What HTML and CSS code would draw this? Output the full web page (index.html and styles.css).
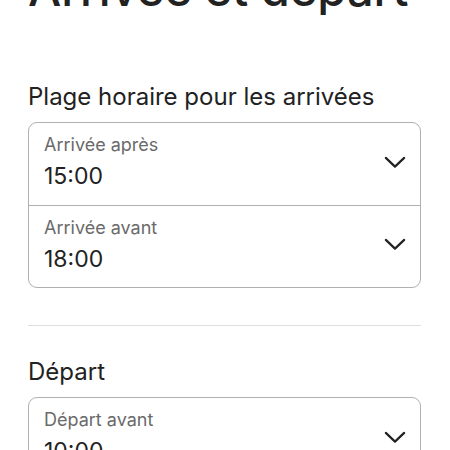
FILE: index.html
```html
<!DOCTYPE html>
<html lang="fr">
<head>
<meta charset="utf-8">
<link rel="stylesheet" href="styles.css">
</head>
<body>
<main class="page">
  <h1 class="title">Arrivée et départ</h1>
  <section class="section section-first">
    <h2 class="section-title">Plage horaire pour les arrivées</h2>
    <div class="select-group">
      <div class="select-row">
        <div class="select-text">
          <div class="select-label">Arrivée après</div>
          <div class="select-value">15:00</div>
        </div>
        <svg class="chevron" viewBox="0 0 24 14" width="22" height="13"><path d="M2 2 L12 11.5 L22 2" fill="none" stroke="#222" stroke-width="2.4" stroke-linecap="round" stroke-linejoin="round"/></svg>
      </div>
      <div class="select-row">
        <div class="select-text">
          <div class="select-label">Arrivée avant</div>
          <div class="select-value">18:00</div>
        </div>
        <svg class="chevron" viewBox="0 0 24 14" width="22" height="13"><path d="M2 2 L12 11.5 L22 2" fill="none" stroke="#222" stroke-width="2.4" stroke-linecap="round" stroke-linejoin="round"/></svg>
      </div>
    </div>
  </section>
  <hr class="divider">
  <section class="section">
    <h2 class="section-title">Départ</h2>
    <div class="select-group">
      <div class="select-row">
        <div class="select-text">
          <div class="select-label">Départ avant</div>
          <div class="select-value">10:00</div>
        </div>
        <svg class="chevron" viewBox="0 0 24 14" width="22" height="13"><path d="M2 2 L12 11.5 L22 2" fill="none" stroke="#222" stroke-width="2.4" stroke-linecap="round" stroke-linejoin="round"/></svg>
      </div>
    </div>
  </section>
</main>
</body>
</html>
```
FILE: styles.css
```css
html, body {
  margin: 0;
  padding: 0;
  background: #fff;
  height: 450px;
  overflow: hidden;
}
body {
  font-family: Inter, "Noto Sans", "Liberation Sans", sans-serif;
  color: #222;
}
.page {
  padding: 0 29px 0 28px;
}
.title {
  margin: -39px 0 0 0;
  font-size: 47px;
  line-height: 56px;
  font-weight: 500;
  letter-spacing: 0;
  color: #222;
  white-space: nowrap;
}
.section-title {
  margin: 0 0 10px 0;
  font-size: 24px;
  line-height: 30px;
  font-weight: 400;
  color: #222;
}
.section-first .section-title {
  margin-top: 65px;
}
.select-group {
  border: 1px solid #b0b0b0;
  border-radius: 9px;
  overflow: hidden;
}
.select-row {
  display: flex;
  align-items: center;
  justify-content: space-between;
  height: 82px;
  padding: 0 14px 0 15px;
  box-sizing: border-box;
}
.select-row + .select-row {
  border-top: 1px solid #b0b0b0;
}
.select-text {
  align-self: flex-start;
  display: flex;
  flex-direction: column;
  padding-top: 11px;
}
.select-label {
  font-size: 18px;
  line-height: 22px;
  color: #6a6a6a;
}
.select-value {
  margin-top: 4px;
  font-size: 23px;
  line-height: 32px;
  color: #222;
}
.chevron {
  display: block;
  margin-bottom: 4px;
}
.divider {
  border: 0;
  border-top: 1px solid #dddddd;
  margin: 37px 0 31px 0;
}
```
